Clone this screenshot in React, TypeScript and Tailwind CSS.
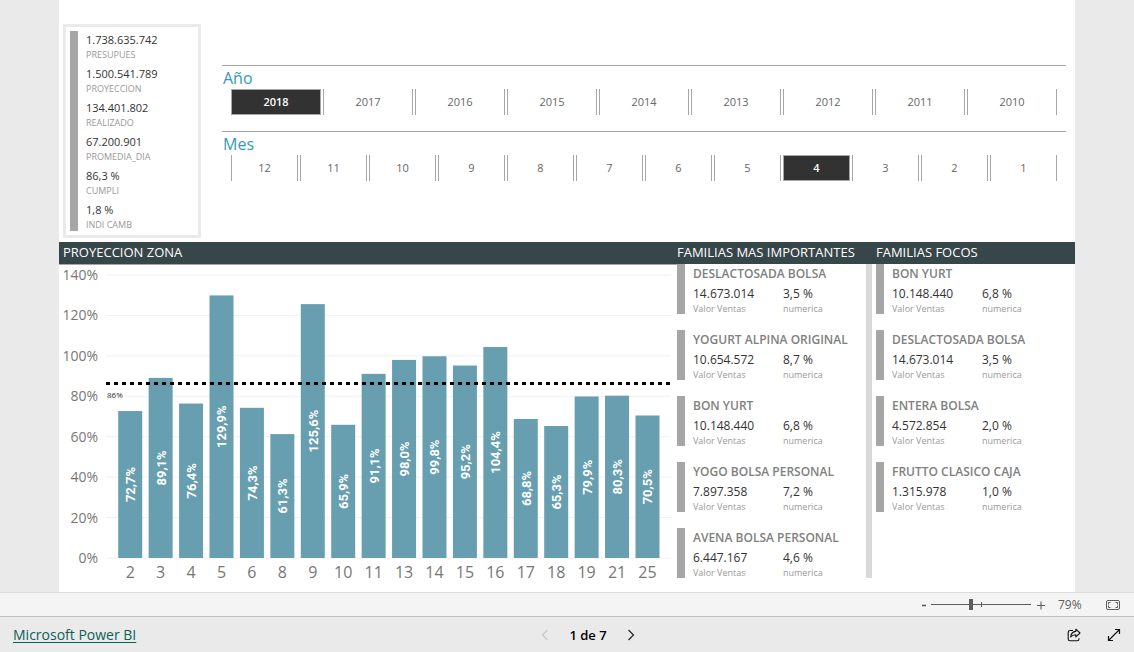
import { useState } from 'react';

const kpis = [
  ['1.738.635.742', 'PRESUPUES'],
  ['1.500.541.789', 'PROYECCION'],
  ['134.401.802', 'REALIZADO'],
  ['67.200.901', 'PROMEDIA_DIA'],
  ['86,3 %', 'CUMPLI'],
  ['1,8 %', 'INDI CAMB'],
];

const years = ['2018', '2017', '2016', '2015', '2014', '2013', '2012', '2011', '2010'];
const months = ['12', '11', '10', '9', '8', '7', '6', '5', '4', '3', '2', '1'];

const zones: [string, number][] = [
  ['2', 72.7], ['3', 89.1], ['4', 76.4], ['5', 129.9], ['6', 74.3], ['8', 61.3],
  ['9', 125.6], ['10', 65.9], ['11', 91.1], ['13', 98.0], ['14', 99.8], ['15', 95.2],
  ['16', 104.4], ['17', 68.8], ['18', 65.3], ['19', 79.9], ['21', 80.3], ['25', 70.5],
];

const importantes = [
  ['DESLACTOSADA BOLSA', '14.673.014', '3,5 %'],
  ['YOGURT ALPINA ORIGINAL', '10.654.572', '8,7 %'],
  ['BON YURT', '10.148.440', '6,8 %'],
  ['YOGO BOLSA PERSONAL', '7.897.358', '7,2 %'],
  ['AVENA BOLSA PERSONAL', '6.447.167', '4,6 %'],
];

const focos = [
  ['BON YURT', '10.148.440', '6,8 %'],
  ['DESLACTOSADA BOLSA', '14.673.014', '3,5 %'],
  ['ENTERA BOLSA', '4.572.854', '2,0 %'],
  ['FRUTTO CLASICO CAJA', '1.315.978', '1,0 %'],
];

function Slicer({ title, items, initial }: { title: string; items: string[]; initial: string }) {
  const [selected, setSelected] = useState(initial);
  return (
    <section className="h-[66px] border-t border-[#a6a6a6]">
      <h2 className="h-[23px] pl-px text-[16px] leading-[25px] text-[#3599b8]">{title}</h2>
      <div className="mx-[9px] flex gap-[2px]">
        {items.map((item) => (
          <button
            key={item}
            type="button"
            aria-pressed={item === selected}
            onClick={() => setSelected(item)}
            className={
              item === selected
                ? 'h-[26px] flex-1 border border-[#a6a6a6] bg-[#323232] text-[11px] font-semibold text-white'
                : 'h-[26px] flex-1 border-x border-[#a6a6a6] text-[11px] text-[#666666]'
            }
          >
            {item}
          </button>
        ))}
      </div>
    </section>
  );
}

function ZoneChart() {
  const base = 294;
  const unit = 283 / 140;
  const step = 547.7 / 18;
  return (
    <svg viewBox="0 0 618 328" className="block w-full" role="img" aria-label="Proyeccion zona">
      {[0, 20, 40, 60, 80, 100, 120, 140].map((tick) => {
        const y = base - tick * unit;
        return (
          <g key={tick}>
            <line x1="47" x2="612" y1={y} y2={y} stroke="#f0f0f0" strokeWidth="1" />
            <text x="39" y={y + 5} textAnchor="end" fontSize="14" fill="#777777">
              {tick}%
            </text>
          </g>
        );
      })}
      {zones.map(([zone, value], i) => {
        const cx = 56 + step * (i + 0.5);
        const height = value * unit;
        const mid = base - height / 2;
        return (
          <g key={zone}>
            <rect x={cx - 12} y={base - height} width="24" height={height} fill="#689fb0" />
            <text
              transform={`translate(${cx + 5} ${mid}) rotate(-90)`}
              textAnchor="middle"
              fontSize="13"
              className="font-['Roboto'] font-bold"
              fill="#ffffff"
            >
              {value.toFixed(1).replace('.', ',')}%
            </text>
            <text x={cx} y={base + 20} textAnchor="middle" fontSize="16" fill="#777777">
              {zone}
            </text>
          </g>
        );
      })}
      <line x1="47" x2="613" y1="119.5" y2="119.5" stroke="#000000" strokeWidth="3" strokeDasharray="4 4" />
      <text x="48" y="134" fontSize="8" fill="#333333">
        86%
      </text>
    </svg>
  );
}

function FamilyList({ rows }: { rows: string[][] }) {
  return (
    <ul className="flex flex-1 flex-col gap-4">
      {rows.map(([name, sales, share]) => (
        <li key={name} className="h-[50px] border-l-8 border-[#a6a6a6] pl-2">
          <h3 className="h-[21px] text-[12px] leading-[19px] font-semibold whitespace-nowrap text-[#808080]">{name}</h3>
          <dl className="grid grid-cols-[90px_auto]">
            <div className="flex flex-col-reverse">
              <dt className="text-[9px] leading-[12px] text-[#999999]">Valor Ventas</dt>
              <dd className="text-[12px] leading-[18px] text-[#333333]">{sales}</dd>
            </div>
            <div className="flex flex-col-reverse">
              <dt className="text-[9px] leading-[12px] text-[#999999]">numerica</dt>
              <dd className="text-[12px] leading-[18px] text-[#333333]">{share}</dd>
            </div>
          </dl>
        </li>
      ))}
    </ul>
  );
}

const headingClass = 'h-[22px] bg-[#374649] text-[13px] leading-[21px] whitespace-nowrap text-white';

export default function App() {
  const [zoom, setZoom] = useState(79);
  const [page, setPage] = useState(1);
  return (
    <div className="flex min-h-screen flex-col bg-[#eaeaea] font-['Open_Sans','Noto_Sans',sans-serif]">
      <main className="flex flex-1 flex-col px-[59px]">
        <div className="flex-1 bg-white">
          <div className="flex h-[242px] items-start pt-6 pr-[9px] pl-1">
            <section className="w-[138px] border-[3px] border-[#eaeaea] p-1">
              <dl className="flex h-[200px] flex-col gap-1 border-l-8 border-[#a6a6a6] pl-2">
                {kpis.map(([value, label]) => (
                  <div key={label} className="flex flex-col-reverse">
                    <dt className="pt-px text-[9px] leading-[12px] text-[#999999]">{label}</dt>
                    <dd className="pt-px text-[11px] leading-[16px] text-[#333333]">{value}</dd>
                  </div>
                ))}
              </dl>
            </section>
            <div className="mt-[41px] ml-[21px] flex-1">
              <Slicer title="Año" items={years} initial="2018" />
              <Slicer title="Mes" items={months} initial="4" />
            </div>
          </div>

          <div className="grid grid-cols-[618fr_199fr_199fr]">
            <section>
              <h2 className={`${headingClass} pl-1`}>PROYECCION ZONA</h2>
              <div className="border-t border-[#a6a6a6]">
                <div className="-mt-px">
                  <ZoneChart />
                </div>
              </div>
            </section>
            <section>
              <h2 className={headingClass}>FAMILIAS MAS IMPORTANTES</h2>
              <div className="mr-1 flex border-r-6 border-[#d9d9d9]">
                <FamilyList rows={importantes} />
              </div>
            </section>
            <section>
              <h2 className={headingClass}>FAMILIAS FOCOS</h2>
              <FamilyList rows={focos} />
            </section>
          </div>
        </div>
      </main>

      <div className="flex h-6 items-center justify-end border-t border-[#dcdcdc] bg-[#f4f4f4] pr-[14px] text-[#605e5c]">
        <button type="button" aria-label="Alejar" onClick={() => setZoom(Math.max(10, zoom - 10))} className="w-[14px]">
          <svg viewBox="0 0 14 10" className="block h-[10px] w-[14px]">
            <path d="M5 5.5h4" stroke="currentColor" strokeWidth="1.6" />
          </svg>
        </button>
        <div className="relative flex h-3 w-[100px] items-center">
          <span className="absolute top-[3px] left-[50px] h-[5px] w-px bg-[#605e5c]" />
          <input
            type="range"
            aria-label="Zoom"
            min={0}
            max={200}
            value={zoom}
            onChange={(e) => setZoom(Number(e.target.value))}
            className="relative h-3 w-full appearance-none bg-transparent [&::-webkit-slider-runnable-track]:h-px [&::-webkit-slider-runnable-track]:bg-[#605e5c] [&::-webkit-slider-thumb]:-mt-[5px] [&::-webkit-slider-thumb]:h-[11px] [&::-webkit-slider-thumb]:w-[4px] [&::-webkit-slider-thumb]:appearance-none [&::-webkit-slider-thumb]:bg-[#605e5c]"
          />
        </div>
        <button type="button" aria-label="Acercar" onClick={() => setZoom(Math.min(200, zoom + 10))} className="w-5">
          <svg viewBox="0 0 20 10" className="block h-[10px] w-5">
            <path d="M6 5.5h8M10 1.5v8" stroke="currentColor" strokeWidth="1.1" />
          </svg>
        </button>
        <output className="ml-[7px] w-[48px] text-[12px] leading-4">{zoom}%</output>
        <button type="button" aria-label="Ajustar a la página" onClick={() => setZoom(79)}>
          <svg viewBox="0 0 14 12" className="block h-3 w-[14px]" fill="none" stroke="currentColor">
            <rect x="0.5" y="1.5" width="13" height="9" rx="1.5" />
            <path d="M4.500 3.500h-2v2M9.500 3.500h2v2M4.500 8.500h-2v-2M9.500 8.500h2v-2" />
          </svg>
        </button>
      </div>

      <footer className="grid h-9 grid-cols-[1fr_auto_1fr] items-center border-t border-[#c0c0c0] px-[13px] pt-px">
        <a href="#power-bi" className="justify-self-start text-[14px] leading-5 text-[#0b6156] underline underline-offset-2">
          Microsoft Power BI
        </a>
        <nav className="ml-[42px] flex items-center gap-[18px]" aria-label="Páginas">
          <button type="button" aria-label="Página anterior" disabled={page === 1} onClick={() => setPage(page - 1)} className="text-black disabled:text-[#c8c6c4]">
            <svg viewBox="0 0 12 12" className="block size-3" fill="none" stroke="currentColor" strokeWidth="1.2">
              <path d="M8.5 1L3.5 6l5 5" />
            </svg>
          </button>
          <span className="text-[13px] leading-5 font-semibold text-black">{page} de 7</span>
          <button type="button" aria-label="Página siguiente" disabled={page === 7} onClick={() => setPage(page + 1)} className="text-[#252423] disabled:text-[#c8c6c4]">
            <svg viewBox="0 0 12 12" className="block size-3" fill="none" stroke="currentColor" strokeWidth="1.2">
              <path d="M3.5 1l5 5-5 5" />
            </svg>
          </button>
        </nav>
        <div className="flex items-center gap-[26px] justify-self-end text-[#111111]">
          <button type="button" aria-label="Compartir">
            <svg viewBox="0 0 14 14" className="block size-[14px]" fill="none" stroke="currentColor" strokeWidth="1.1" strokeLinejoin="round">
              <path d="M6 2.5H3A1.8 1.8 0 0 0 1.200 4.300V11A1.800 1.800 0 0 0 3 12.800h7.200A1.800 1.800 0 0 0 12 11v-.8" />
              <path d="M8.800 1.200L13 5 8.800 8.800V6.700C6.500 6.600 5 7.200 3.700 9 4 6 5.800 3.700 8.800 3.400z" />
            </svg>
          </button>
          <button type="button" aria-label="Pantalla completa">
            <svg viewBox="0 0 14 14" className="block size-[14px]" fill="none" stroke="currentColor" strokeWidth="1.2">
              <path d="M1.500 12.500l11-11M8 1.500h4.500V6M1.500 8v4.500H6" />
            </svg>
          </button>
        </div>
      </footer>
    </div>
  );
}
